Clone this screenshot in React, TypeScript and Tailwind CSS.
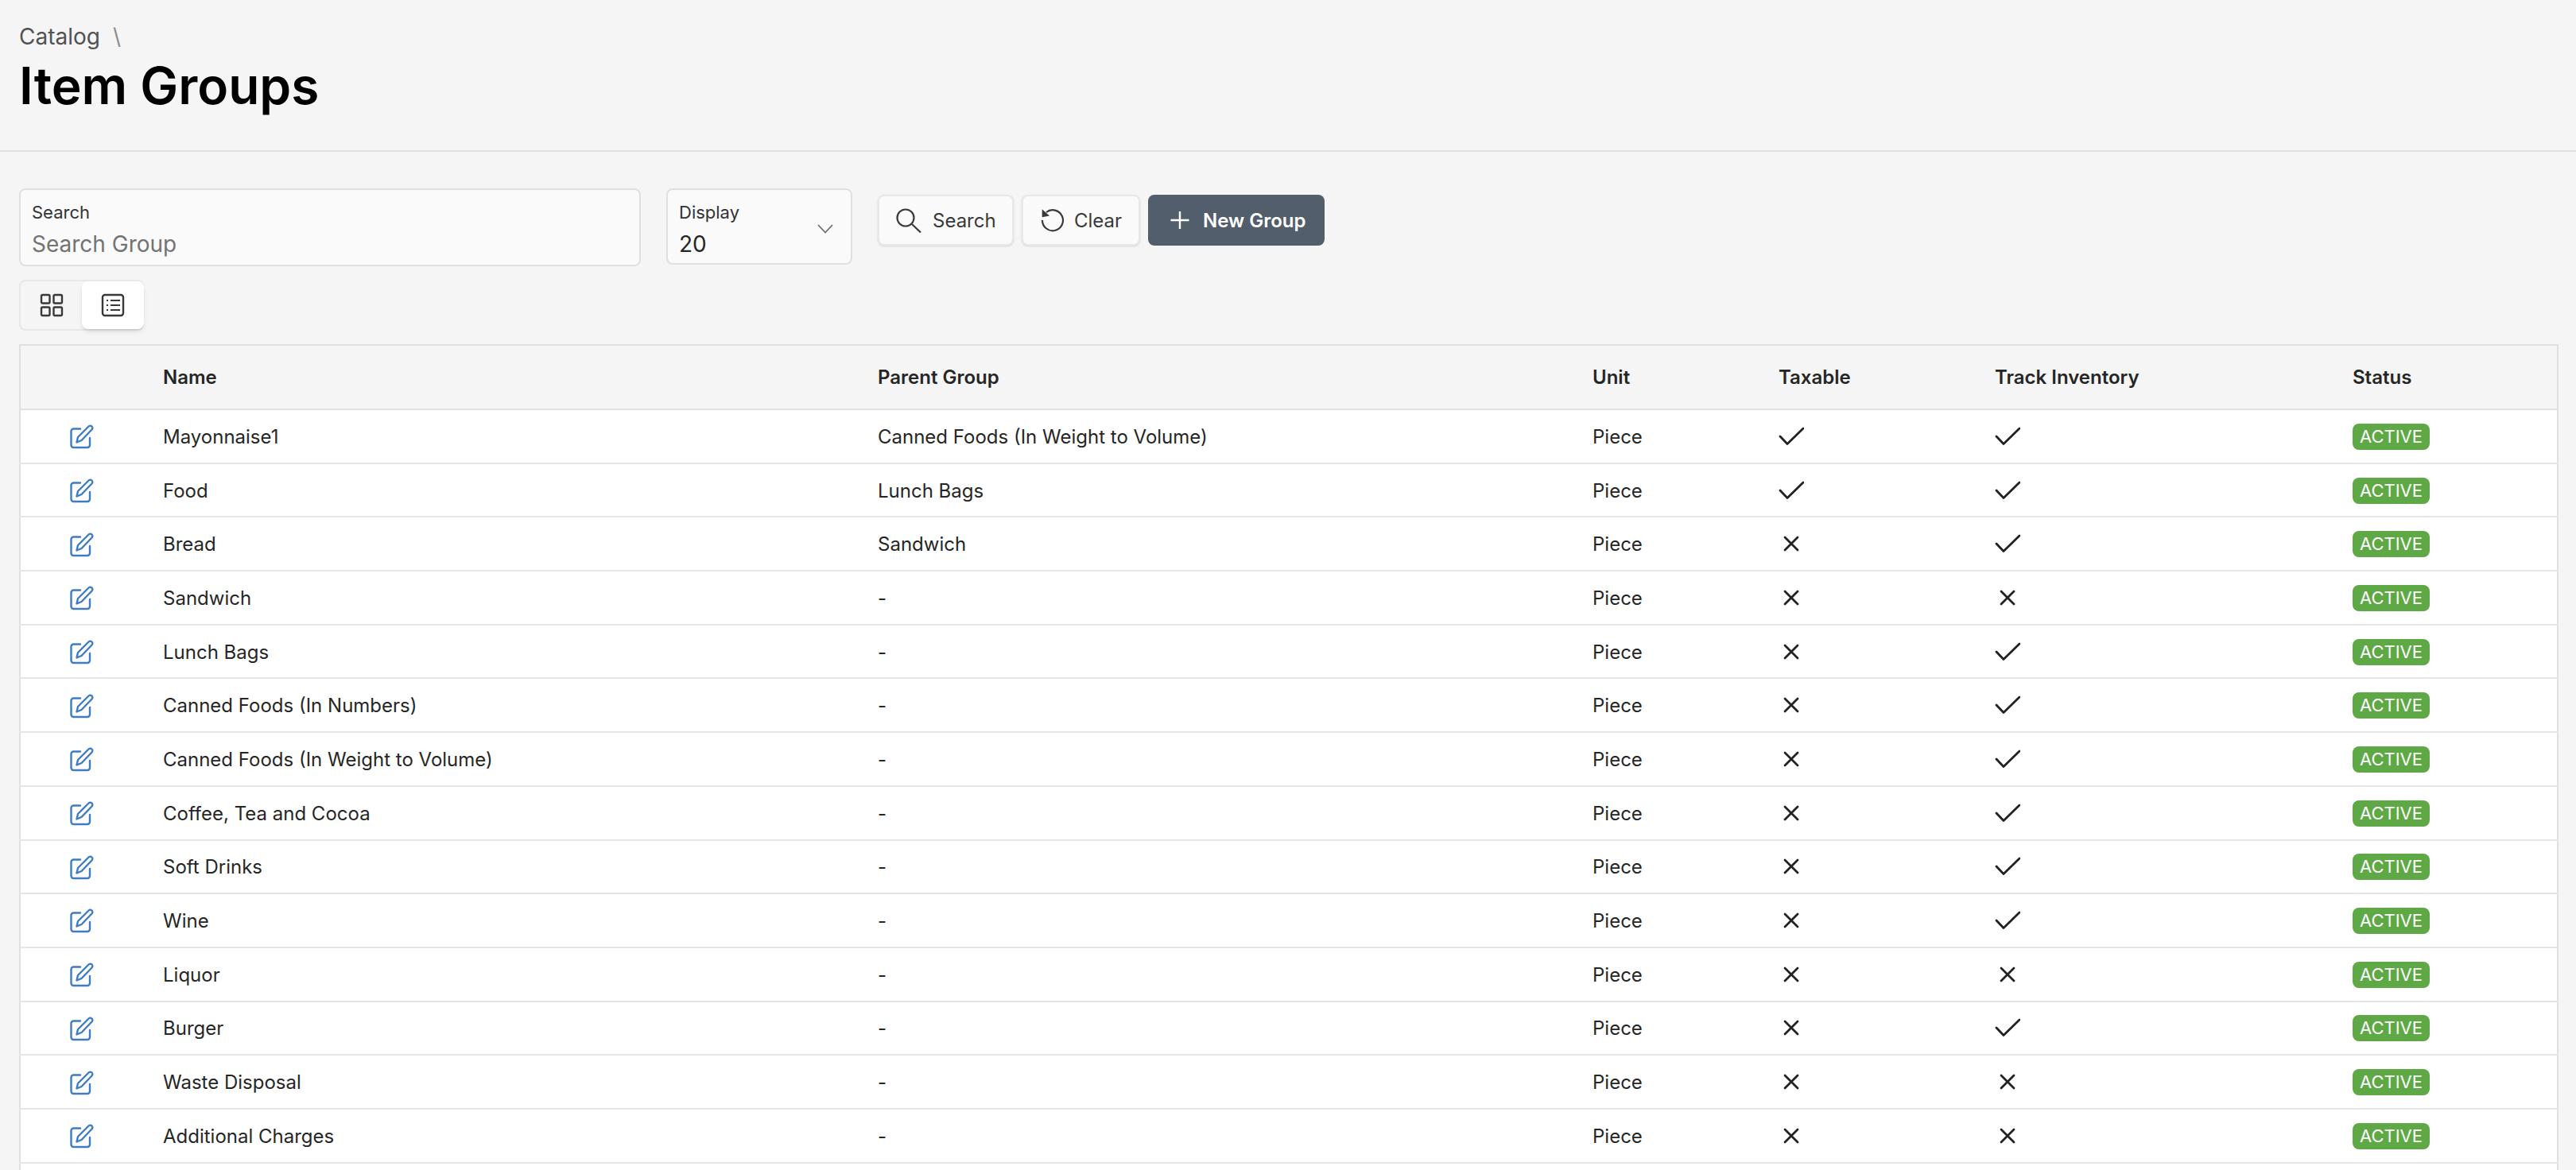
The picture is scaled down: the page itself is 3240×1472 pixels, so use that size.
import React from 'react';

const rows: [string, string, boolean, boolean][] = [
  ['Mayonnaise1', 'Canned Foods (In Weight to Volume)', true, true],
  ['Food', 'Lunch Bags', true, true],
  ['Bread', 'Sandwich', false, true],
  ['Sandwich', '-', false, false],
  ['Lunch Bags', '-', false, true],
  ['Canned Foods (In Numbers)', '-', false, true],
  ['Canned Foods (In Weight to Volume)', '-', false, true],
  ['Coffee, Tea and Cocoa', '-', false, true],
  ['Soft Drinks', '-', false, true],
  ['Wine', '-', false, true],
  ['Liquor', '-', false, false],
  ['Burger', '-', false, true],
  ['Waste Disposal', '-', false, false],
  ['Additional Charges', '-', false, false],
];

const EditIcon = () => (
  <svg width="32" height="32" viewBox="0 0 32 32" fill="none" stroke="#3f7cc4" strokeWidth="2.4" strokeLinecap="round" strokeLinejoin="round">
    <path d="M15 6.5H6.5a3 3 0 0 0-3 3v17.5a3 3 0 0 0 3 3h17.5a3 3 0 0 0 3-3v-9" />
    <path d="M10.5 23.5l1.5-6.5L25.5 3.5a2.8 2.8 0 0 1 4 0 2.8 2.8 0 0 1 0 4L16.5 21z" />
  </svg>
);

const CheckIcon = () => (
  <svg width="32" height="32" viewBox="0 0 32 32" fill="none" stroke="#222" strokeWidth="2.8" strokeLinecap="round" strokeLinejoin="round">
    <path d="M2 16l9 9.5L31 6" />
  </svg>
);

const CrossIcon = () => (
  <svg width="32" height="32" viewBox="0 0 32 32" fill="none" stroke="#222" strokeWidth="2.8" strokeLinecap="round">
    <path d="M8 8l16 16M24 8L8 24" />
  </svg>
);

const Field = ({ label, value, muted }: { label: string; value: string; muted?: boolean }) => (
  <div className="flex flex-col">
    <span className="text-[22px] leading-[32px] text-[#333333]">{label}</span>
    <span className={`mt-[4px] text-[28px] leading-[40px] ${muted ? 'text-[#737373]' : 'text-[#262626]'}`}>{value}</span>
  </div>
);

export default function App() {
  return (
    <div className="h-[1472px] overflow-hidden bg-[#f5f5f5] font-['Inter',sans-serif] text-[#262626]">
      {/* Header */}
      <div className="h-[191px] border-b-2 border-[#e0e0e0] px-6 pt-[28px]">
        <div className="flex items-center gap-4 text-[28px] leading-[36px] text-[#525252]">
          <span>Catalog</span>
          <span className="text-[#8d8d8d]">\</span>
        </div>
        <h1 className="mt-[8px] text-[64px] font-semibold leading-[72px] text-black">Item Groups</h1>
      </div>

      <div className="px-6 pt-[46px]">
        {/* Filters */}
        <div className="flex items-start">
          <div className="h-[98px] w-[782px] rounded-lg border-2 border-[#e0e0e0] bg-[#fafafa] px-[14px] pt-[12px]">
            <Field label="Search" value="Search Group" muted />
          </div>
          <div className="relative ml-[32px] h-[96px] w-[234px] rounded-lg border-2 border-[#e0e0e0] bg-[#fafafa] px-[14px] pt-[12px]">
            <Field label="Display" value="20" />
            <svg className="absolute right-[20px] top-[36px]" width="24" height="24" viewBox="0 0 24 24" fill="none" stroke="#6f6f6f" strokeWidth="1.8">
              <path d="M3 8l9 9.5L21 8" />
            </svg>
          </div>
          <div className="ml-[32px] mt-[8px] flex gap-[10px]">
            <button className="flex h-[64px] w-[171px] items-center gap-[14px] rounded-lg border-2 border-[#e8e8e8] bg-[#fafafa] pl-[21px] text-[24px] text-[#393939] shadow-sm">
              <svg width="32" height="32" viewBox="0 0 32 32" fill="none" stroke="#393939" strokeWidth="2.2">
                <circle cx="12" cy="13" r="10.5" />
                <path d="M20 21l11 10.5" />
              </svg>
              <span className="pt-[2px]">Search</span>
            </button>
            <button className="flex h-[64px] w-[149px] items-center gap-[11px] rounded-lg border-2 border-[#e8e8e8] bg-[#fafafa] pl-[21px] text-[24px] text-[#393939] shadow-sm">
              <svg width="32" height="32" viewBox="0 0 32 32" fill="none" stroke="#393939" strokeWidth="2.2">
                <path d="M8 6a13 13 0 1 1-5 10" />
                <path d="M2.7 2.3v10l9.3-1.7z" fill="#393939" stroke="none" />
              </svg>
              <span className="pt-[2px]">Clear</span>
            </button>
            <button className="flex h-[64px] w-[222px] items-center gap-[15px] rounded-lg bg-[#525e6c] pl-[26px] text-[24px] font-semibold text-white">
              <svg width="28" height="28" viewBox="0 0 28 28" fill="none" stroke="#fff" strokeWidth="2.4">
                <path d="M14 3v22M2.5 14h23" />
              </svg>
              <span className="pt-[2px]">New Group</span>
            </button>
          </div>
        </div>

        {/* View switch */}
        <div className="mt-[17px] flex h-[64px] w-[157px] rounded-lg border-2 border-[#e8e8e8]">
          <div className="flex w-[77px] items-center justify-center">
            <svg width="30" height="30" viewBox="0 0 30 30" fill="none" stroke="#393939" strokeWidth="2.4">
              <rect x="2" y="2" width="10.5" height="10.5" rx="1.5" />
              <rect x="17.5" y="2" width="10.5" height="10.5" rx="1.5" />
              <rect x="2" y="17.5" width="10.5" height="10.5" rx="1.5" />
              <rect x="17.5" y="17.5" width="10.5" height="10.5" rx="1.5" />
            </svg>
          </div>
          <div className="-mr-[2px] flex flex-1 items-center justify-center rounded-lg bg-white shadow-md">
            <svg width="30" height="30" viewBox="0 0 30 30" fill="none" stroke="#393939" strokeWidth="2.4">
              <rect x="2" y="2" width="26" height="26" rx="3" />
              <path d="M12 9h12M12 15h12M12 21h12M7 9h2M7 15h2M7 21h2" strokeWidth="2" />
            </svg>
          </div>
        </div>

        {/* Table */}
        <table className="mt-[17px] w-[3192px] table-fixed border-collapse border-2 border-[#e0e0e0] text-[24px]">
          <colgroup>
            <col className="w-[156px]" />
            <col className="w-[899px]" />
            <col className="w-[899px]" />
            <col className="w-[234px]" />
            <col className="w-[272px]" />
            <col className="w-[450px]" />
            <col className="w-[282px]" />
          </colgroup>
          <thead>
            <tr className="h-[81px] border-b-2 border-[#e0e0e0] text-left font-semibold text-[#262626]">
              <th />
              {['Name', 'Parent Group', 'Unit', 'Taxable', 'Track Inventory', 'Status'].map((h) => (
                <th key={h} className="px-6 font-semibold">{h}</th>
              ))}
            </tr>
          </thead>
          <tbody className="bg-white">
            {rows.map(([name, parent, taxable, track]) => (
              <tr key={name} className="h-[67.7px] border-b-2 border-[#e5e5e5]">
                <td className="pb-[2px] pr-[4px] text-center"><span className="inline-flex align-middle"><EditIcon /></span></td>
                <td className="px-6 pt-[2px]">{name}</td>
                <td className="px-6 pt-[2px]">{parent}</td>
                <td className="px-6 pt-[2px]">Piece</td>
                <td className="px-6">{taxable ? <CheckIcon /> : <CrossIcon />}</td>
                <td className="px-6">{track ? <CheckIcon /> : <CrossIcon />}</td>
                <td className="px-6">
                  <span className="inline-block rounded-lg bg-[#5ea945] px-[9px] text-[22px] leading-[33px] text-white">ACTIVE</span>
                </td>
              </tr>
            ))}
            <tr className="h-[67.7px]"><td colSpan={7} /></tr>
          </tbody>
        </table>
      </div>
    </div>
  );
}
